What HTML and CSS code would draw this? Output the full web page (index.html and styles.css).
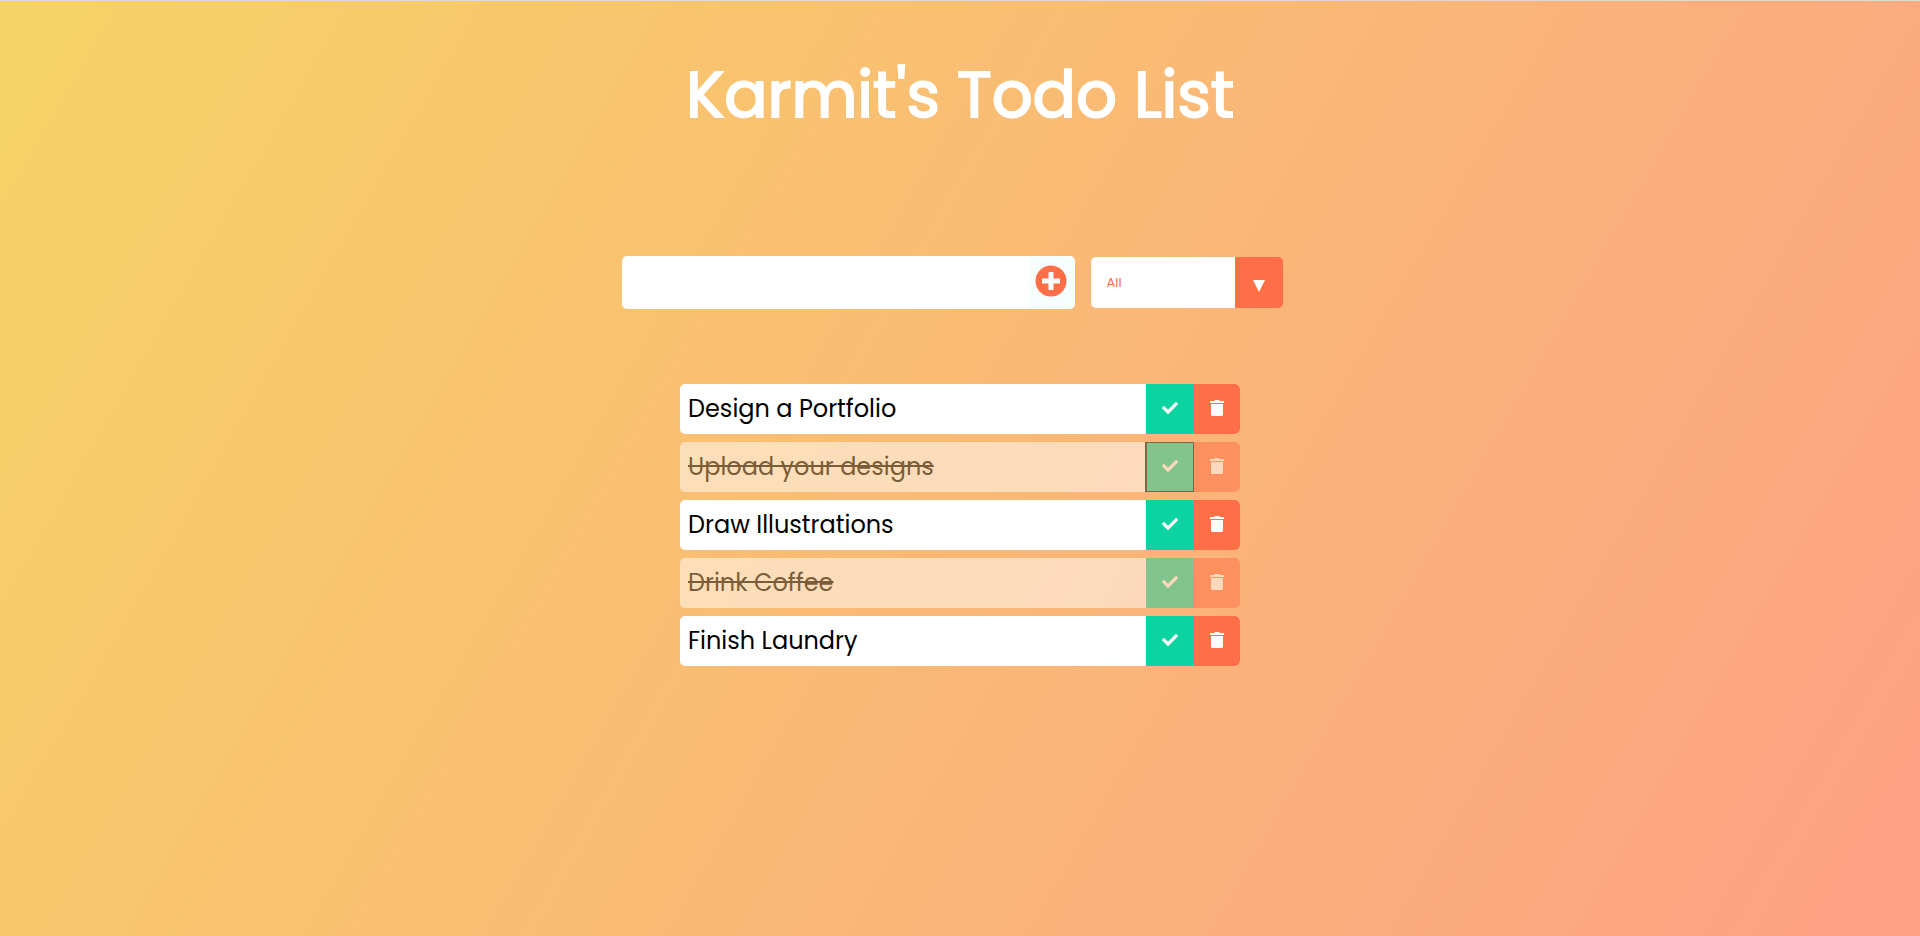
FILE: index.html
```html
<!DOCTYPE html>
<html lang="en">
<head>
<meta charset="utf-8">
<meta name="viewport" content="width=device-width, initial-scale=1">
<title>Karmit's Todo List</title>
<link rel="stylesheet" href="styles.css">
</head>
<body>
<svg class="sprite" aria-hidden="true">
  <symbol id="check" viewBox="0 0 512 512"><path d="M173.900 439.400l-166.400-166.400c-10-10-10-26.200 0-36.200l36.200-36.200c10-10 26.200-10 36.200 0L192 312.700 432.100 72.600c10-10 26.200-10 36.200 0l36.200 36.200c10 10 10 26.200 0 36.200l-294.400 294.400c-10 10-26.200 10-36.200 0z"/></symbol>
  <symbol id="trash" viewBox="0 0 448 512"><path d="M432 32H312l-9.400-18.700A24 24 0 0 0 281.100 0H166.800a23.700 23.700 0 0 0-21.400 13.300L136 32H16A16 16 0 0 0 0 48v32a16 16 0 0 0 16 16h416a16 16 0 0 0 16-16V48a16 16 0 0 0-16-16zM32 128V464a48 48 0 0 0 48 48h288a48 48 0 0 0 48-48V128z"/></symbol>
</svg>
<header class="header">
  <h1 class="title">Karmit's Todo List</h1>
</header>
<main>
  <form class="form">
    <div class="entry">
      <input class="entry-input" type="text" aria-label="New todo">
      <button class="entry-button" type="button" aria-label="Add todo">
        <svg class="plus" viewBox="0 0 512 512" aria-hidden="true"><path fill-rule="evenodd" d="M256 8a248 248 0 1 0 0 496a248 248 0 1 0 0-496zM400 284a12 12 0 0 1-12 12h-92v92a12 12 0 0 1-12 12h-56a12 12 0 0 1-12-12v-92h-92a12 12 0 0 1-12-12v-56a12 12 0 0 1 12-12h92v-92a12 12 0 0 1 12-12h56a12 12 0 0 1 12 12v92h92a12 12 0 0 1 12 12z"/></svg>
      </button>
    </div>
    <div class="filter">
      <select class="filter-select" aria-label="Filter todos">
        <option>All</option>
        <option>Completed</option>
        <option>Uncompleted</option>
      </select>
      <span class="filter-arrow" aria-hidden="true"><svg class="caret" viewBox="0 0 12 12"><path d="M0 0h12L6 12z"/></svg></span>
    </div>
  </form>
  <ul class="list">
    <li class="todo"><span class="todo-text">Design a Portfolio</span><button class="check" type="button" aria-label="Complete"><svg class="icon"><use href="#check"/></svg></button><button class="trash" type="button" aria-label="Delete"><svg class="icon"><use href="#trash"/></svg></button></li>
    <li class="todo done"><span class="todo-text">Upload your designs</span><button class="check focused" type="button" aria-label="Complete"><svg class="icon"><use href="#check"/></svg></button><button class="trash" type="button" aria-label="Delete"><svg class="icon"><use href="#trash"/></svg></button></li>
    <li class="todo"><span class="todo-text">Draw Illustrations</span><button class="check" type="button" aria-label="Complete"><svg class="icon"><use href="#check"/></svg></button><button class="trash" type="button" aria-label="Delete"><svg class="icon"><use href="#trash"/></svg></button></li>
    <li class="todo done"><span class="todo-text">Drink Coffee</span><button class="check" type="button" aria-label="Complete"><svg class="icon"><use href="#check"/></svg></button><button class="trash" type="button" aria-label="Delete"><svg class="icon"><use href="#trash"/></svg></button></li>
    <li class="todo"><span class="todo-text">Finish Laundry</span><button class="check" type="button" aria-label="Complete"><svg class="icon"><use href="#check"/></svg></button><button class="trash" type="button" aria-label="Delete"><svg class="icon"><use href="#trash"/></svg></button></li>
  </ul>
</main>
</body>
</html>
```

FILE: styles.css
```css
* {
  box-sizing: border-box;
  margin: 0;
  padding: 0;
}

body {
  min-height: 100vh;
  border-top: 1px solid #dadada;
  background: linear-gradient(120deg, #f6d365, #fda085) border-box;
  font-family: Poppins, Inter, sans-serif;
  color: #000;
}

button,
input,
select {
  border: 0;
  font: inherit;
  appearance: none;
}

button,
select {
  cursor: pointer;
}

svg {
  display: block;
  fill: currentColor;
}

.sprite {
  display: none;
}

.header {
  display: flex;
  justify-content: center;
  padding: 46px 16px 0;
}

.title {
  font-size: 64px;
  font-weight: 400;
  line-height: 96px;
  text-align: center;
  color: #fff;
  -webkit-text-stroke: 2px #fff;
}

.form {
  display: flex;
  justify-content: center;
  align-items: center;
  margin-top: 113px;
}

.entry {
  display: flex;
  height: 53px;
  border-radius: 5px;
  overflow: hidden;
}

.entry-input {
  width: 405px;
  padding: 8px;
  background: #fff;
  font-size: 24px;
  outline: 0;
}

.entry-button {
  display: flex;
  padding: 9px 8px 0;
  background: #f7fffe;
  color: #ff6f47;
}

.plus {
  width: 32px;
  height: 32px;
}

.filter {
  display: flex;
  width: 192px;
  height: 51px;
  margin: 0 16px;
  border-radius: 5px;
  overflow: hidden;
}

.filter-select {
  flex: 1;
  min-width: 0;
  padding: 0 16px;
  background: #fff;
  color: #ff6f47;
  font-size: 13px;
}

.filter-arrow {
  display: grid;
  place-items: center;
  width: 48px;
  padding-top: 6px;
  background: #ff6f47;
  color: #fff;
}

.caret {
  width: 12px;
  height: 12px;
}

.list {
  display: grid;
  gap: 8px;
  width: 560px;
  max-width: 100%;
  margin: 75px auto 0;
  list-style: none;
}

.todo {
  display: flex;
  height: 50px;
  border-radius: 5px;
  background: #fff;
  overflow: hidden;
}

.done {
  opacity: 0.5;
}

.todo-text {
  flex: 1;
  padding: 0 8px;
  font-size: 24px;
  line-height: 50px;
}

.done .todo-text {
  text-decoration: line-through;
}

.check,
.trash {
  display: grid;
  place-items: center;
  padding-bottom: 2px;
  color: #fff;
}

.check {
  width: 48px;
  background: #0bd4a2;
}

.trash {
  width: 46px;
  background: #ff6f47;
}

.focused {
  outline: 1px solid #101010;
  outline-offset: -1px;
  box-shadow: -1px 0 #101010;
}

.icon {
  width: 16px;
  height: 16px;
}
```
